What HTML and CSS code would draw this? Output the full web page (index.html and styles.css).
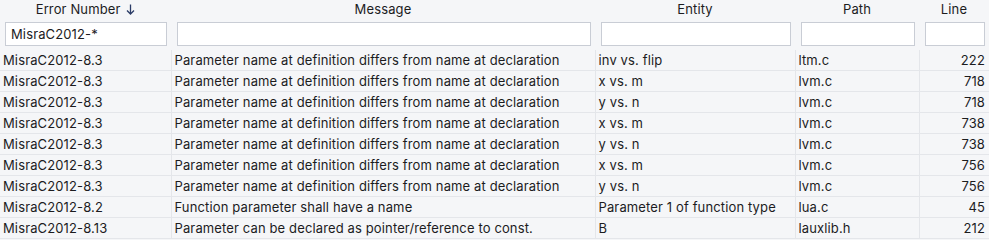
FILE: index.html
```html
<!DOCTYPE html>
<html>
<head>
<meta charset="utf-8">
<link rel="stylesheet" href="styles.css">
</head>
<body>
<table class="grid">
  <colgroup>
    <col class="c-num"><col class="c-msg"><col class="c-ent"><col class="c-path"><col class="c-line">
  </colgroup>
  <thead>
    <tr class="head">
      <th>Error Number <svg class="sort" width="9" height="11" viewBox="0 0 9 11"><path d="M4.5 0.5V10M1 6.5L4.5 10L8 6.5" fill="none" stroke="#2a3b66" stroke-width="1.3"/></svg></th>
      <th>Message</th>
      <th>Entity</th>
      <th>Path</th>
      <th>Line</th>
    </tr>
    <tr class="filters">
      <th class="f1"><input class="filter" value="MisraC2012-*"></th>
      <th><input class="filter"></th>
      <th><input class="filter"></th>
      <th><input class="filter"></th>
      <th><input class="filter"></th>
    </tr>
  </thead>
  <tbody>
    <tr><td>MisraC2012-8.3</td><td>Parameter name at definition differs from name at declaration</td><td>inv vs. flip</td><td>ltm.c</td><td class="num">222</td></tr>
    <tr><td>MisraC2012-8.3</td><td>Parameter name at definition differs from name at declaration</td><td>x vs. m</td><td>lvm.c</td><td class="num">718</td></tr>
    <tr><td>MisraC2012-8.3</td><td>Parameter name at definition differs from name at declaration</td><td>y vs. n</td><td>lvm.c</td><td class="num">718</td></tr>
    <tr><td>MisraC2012-8.3</td><td>Parameter name at definition differs from name at declaration</td><td>x vs. m</td><td>lvm.c</td><td class="num">738</td></tr>
    <tr><td>MisraC2012-8.3</td><td>Parameter name at definition differs from name at declaration</td><td>y vs. n</td><td>lvm.c</td><td class="num">738</td></tr>
    <tr><td>MisraC2012-8.3</td><td>Parameter name at definition differs from name at declaration</td><td>x vs. m</td><td>lvm.c</td><td class="num">756</td></tr>
    <tr><td>MisraC2012-8.3</td><td>Parameter name at definition differs from name at declaration</td><td>y vs. n</td><td>lvm.c</td><td class="num">756</td></tr>
    <tr><td>MisraC2012-8.2</td><td>Function parameter shall have a name</td><td>Parameter 1 of function type</td><td>lua.c</td><td class="num">45</td></tr>
    <tr><td>MisraC2012-8.13</td><td>Parameter can be declared as pointer/reference to const.</td><td>B</td><td>lauxlib.h</td><td class="num">212</td></tr>
  </tbody>
</table>
</body>
</html>
```
FILE: styles.css
```css
html, body {
  margin: 0;
  padding: 0;
  background: #f5f6f8;
}
body {
  font-family: Inter, "Noto Sans", sans-serif;
  font-size: 13px;
  letter-spacing: 0.13px;
  color: #1c1c1e;
}
.grid {
  border-collapse: collapse;
  table-layout: fixed;
  width: 989px;
}
.c-num { width: 171px; }
.c-msg { width: 424px; }
.c-ent { width: 200px; }
.c-path { width: 124px; }
.c-line { width: 70px; }

.head th {
  font-weight: normal;
  height: 18px;
  padding: 0;
  text-align: center;
  line-height: 16px;
  vertical-align: middle;
}
.sort {
  vertical-align: -1px;
  margin-left: 2px;
}
.filters th {
  padding: 4px 4px 4px 6px;
  height: 24px;
}
.filters th.f1 {
  padding-left: 5px;
}
.filter {
  display: block;
  box-sizing: border-box;
  width: 100%;
  height: 24px;
  margin: 0;
  border: 1px solid #c9cdd5;
  background: #ffffff;
  font-family: Inter, "Noto Sans", sans-serif;
  font-size: 13px;
  letter-spacing: 0.13px;
  color: #1c1c1e;
  padding: 0 5px;
  outline: none;
}
tbody td {
  height: 20px;
  padding: 0 4px 0 3px;
  border-bottom: 1px solid #e4e6ea;
  border-left: 1px solid #e4e6ea;
  white-space: nowrap;
  overflow: hidden;
  line-height: 20px;
}
tbody td:first-child {
  border-left: none;
}
tbody td.num {
  text-align: right;
  padding-right: 4px;
}
```
